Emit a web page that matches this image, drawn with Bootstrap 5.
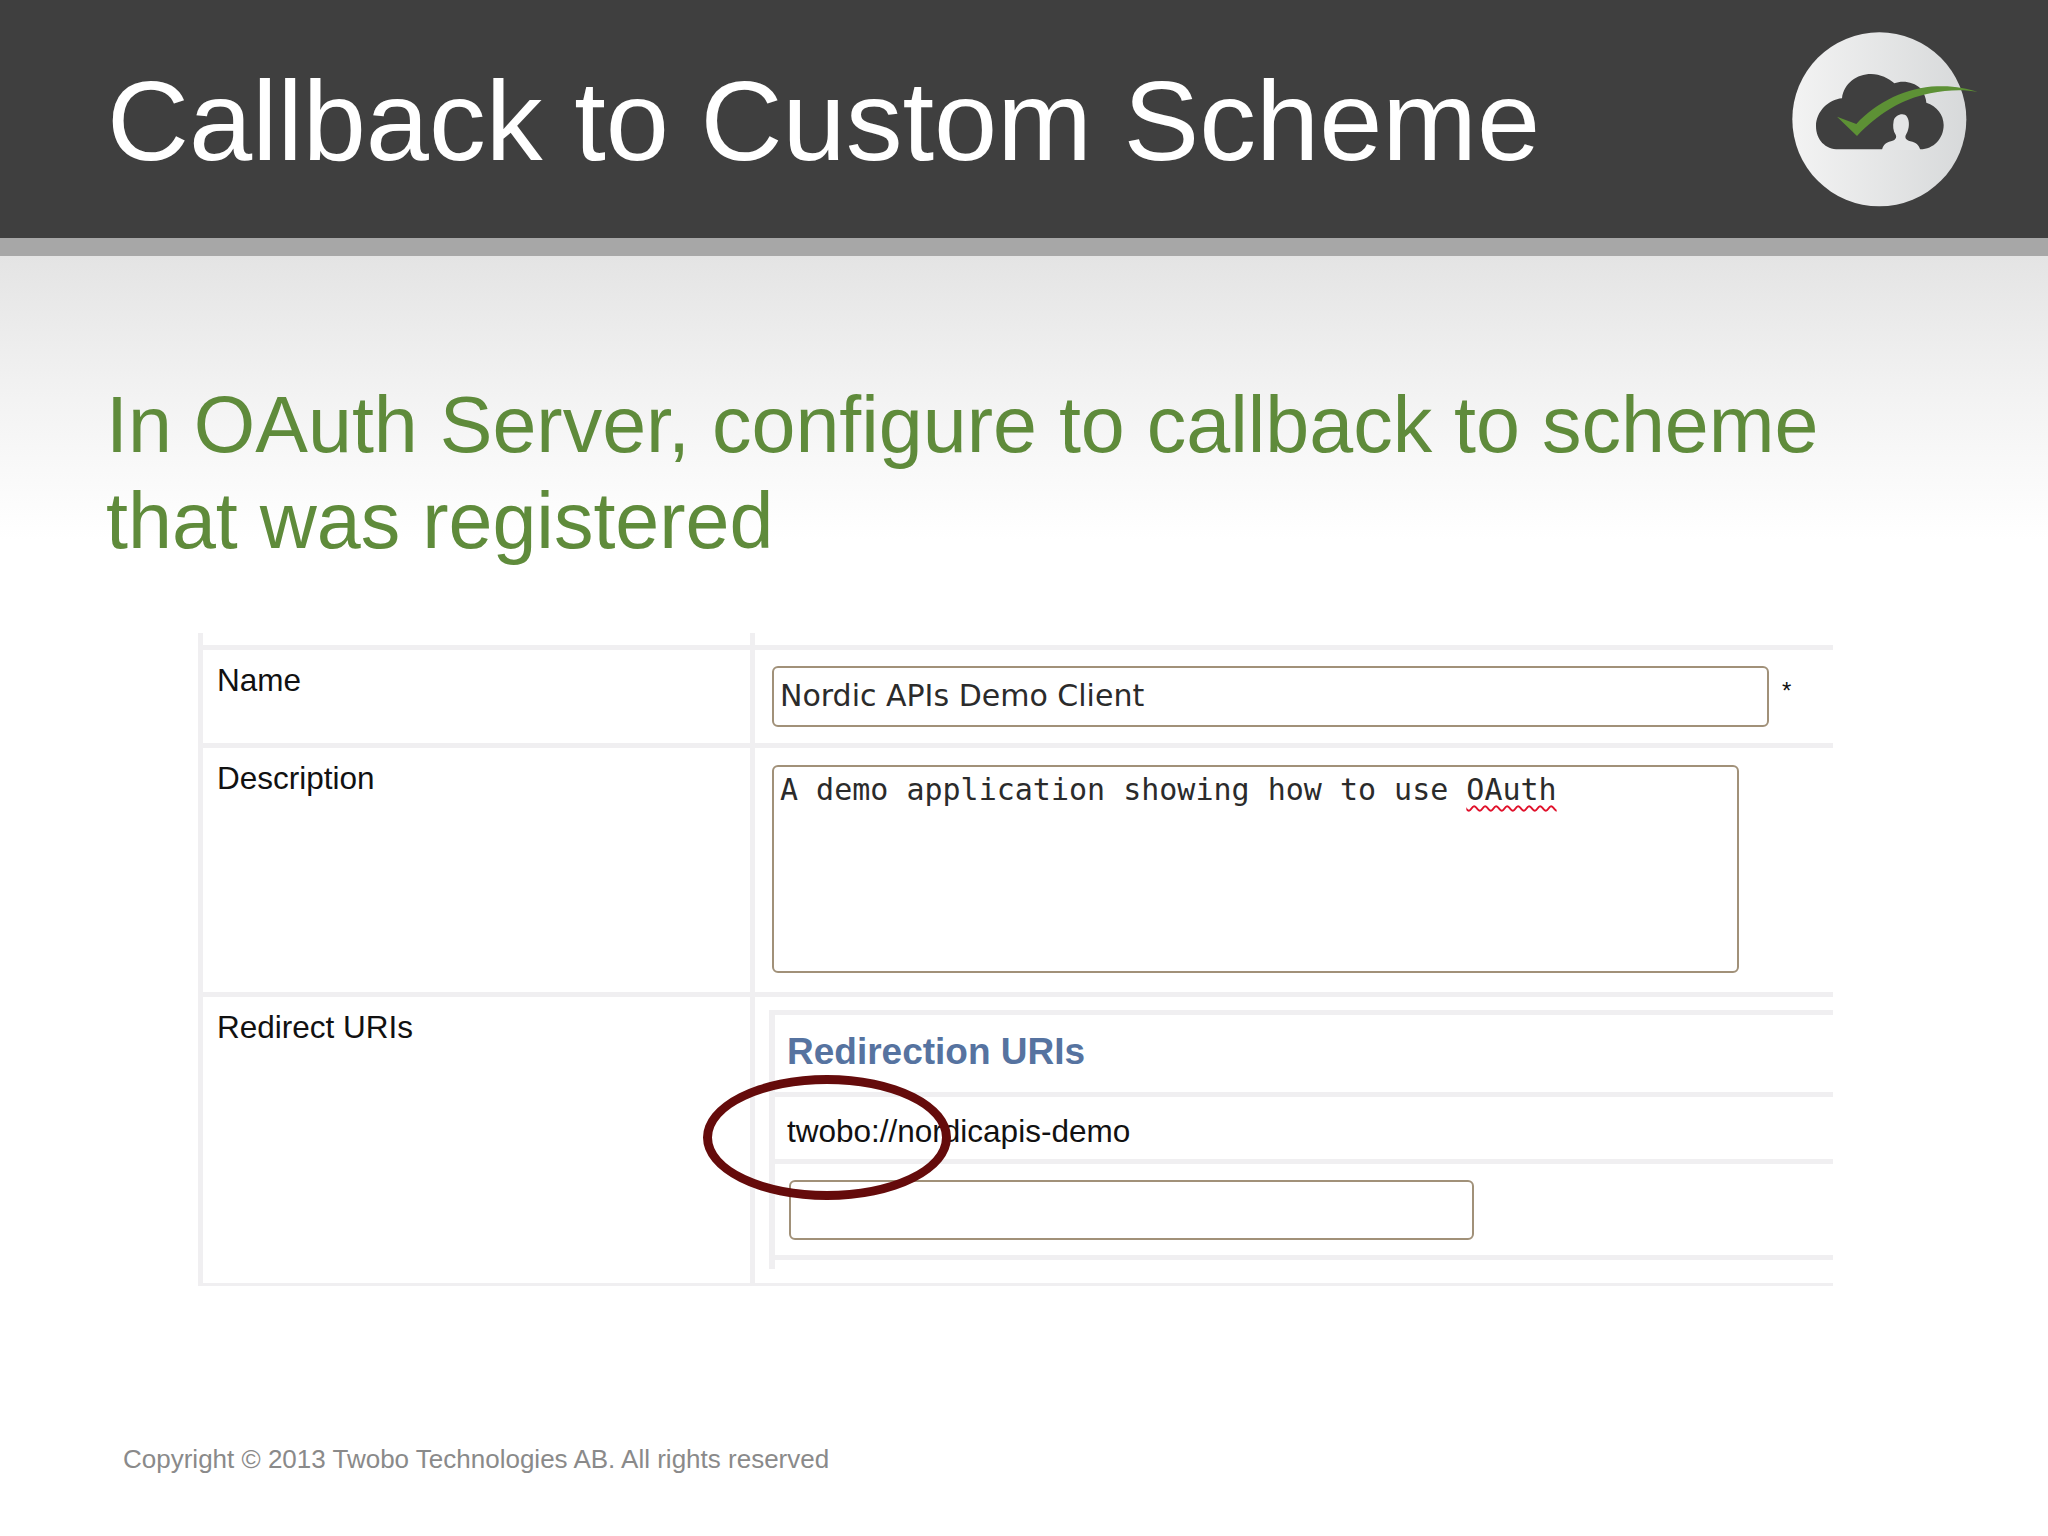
<!DOCTYPE html>
<html lang="en">
<head>
<meta charset="utf-8">
<title>Callback to Custom Scheme</title>
<link href="https://cdn.jsdelivr.net/npm/bootstrap@5.3.0/dist/css/bootstrap.min.css" rel="stylesheet">
<style>
html, body { margin: 0; width: 2048px; height: 1536px; overflow: hidden; }
body {
  font-family: "Liberation Sans", Arial, sans-serif; color: #111;
  background: linear-gradient(#e4e4e4 256px, #f3f3f3 400px, #ffffff 540px) no-repeat;
}
.slide-head { height: 256px; background: #3f3f3f; border-bottom: 18px solid #a7a7a7; padding: 0 0 0 107px; }
.slide-title { font-size: 113.6px; line-height: 1; font-weight: 400; color: #fff; margin: 0 0 -4px; }
.slide-logo { width: 187px; height: 175px; margin-right: 69px; display: block; }
.slide-sub { font-family: inherit; font-size: 79px; line-height: 96px; font-weight: 400; color: #5f8b3b; margin: 121px 0 0 106px; width: 1800px; }
.sheet { width: 1635px; margin: 64px 0 0 198px; border-left: 5px solid #f0eff1; border-bottom: 3px solid #f0eff1; font-size: 31.5px; line-height: 36px; }
.sheet-row { border-top: 5px solid #f0eff1; }
.sheet-stub { height: 12px; }
.sheet-key { width: 552px; flex: none; border-right: 5px solid #f0eff1; padding: 12px 14px; }
.sheet-val { flex: 1 1 auto; min-width: 0; }
.val-name { padding: 16px 0 16px 17px; }
.val-desc { padding: 17px 0 19px 17px; }
.val-uris { padding: 13px 0 14px 14px; }
.field.form-control { border: 2px solid #a19179; border-radius: 6px; color: #2b2b2b; background: #fff; box-shadow: none; }
.field-name { width: 997px; height: 61px; padding: 0 0 0 6px; font-family: "DejaVu Sans", sans-serif; font-size: 30px; line-height: 55px; }
.field-desc { width: 967px; height: 208px; padding: 5px 6px; font-family: "DejaVu Sans Mono", monospace; font-size: 30px; line-height: 36px; white-space: pre; }
.field-uri { width: 685px; height: 60px; padding: 0 6px; }
.spell { text-decoration: underline wavy #e0102a 2px; text-underline-offset: 5px; }
.req-star { font-size: 24px; line-height: 1; margin: 13px 0 0 13px; }
.uri-box { border-left: 6px solid #f0eff1; border-top: 5px solid #f0eff1; }
.uri-title { height: 77px; padding: 15px 0 0 12px; margin: 0; font-family: inherit; font-size: 37px; line-height: 44px; font-weight: 700; color: #5673a0; }
.uri-item { height: 67px; border-top: 5px solid #f0eff1; padding: 16px 0 0 12px; }
.uri-new { height: 96px; border-top: 5px solid #f0eff1; padding: 16px 0 0 14px; }
.uri-end { height: 14px; border-top: 5px solid #f0eff1; }
.sheet-wrap { position: relative; }
.ring { position: absolute; left: 703px; top: 442px; width: 248px; height: 125px; border: 9px solid #650b0b; border-radius: 50%; }
.slide-foot { margin: 157px 0 0 123px; font-size: 26px; line-height: 32px; color: #8a8a8a; }
</style>
</head>
<body>
<header class="slide-head d-flex align-items-center justify-content-between">
  <h1 class="slide-title">Callback to Custom Scheme</h1>
  <svg class="slide-logo" viewBox="275 97 561 523" aria-hidden="true">
    <defs><linearGradient id="disc" x1="0" y1="0" x2="1" y2="0"><stop offset="0" stop-color="#f3f3f3"/><stop offset="1" stop-color="#d7d9da"/></linearGradient></defs>
    <circle cx="537" cy="358" r="261" fill="url(#disc)"/>
    <path d="M415 448C375 448 347 420 347 378C347 335 385 298 425 295C430 250 470 222 512 222C540 222 565 235 582 250C605 240 640 245 660 265C672 280 677 295 678 308C710 318 730 345 730 375C730 415 700 448 660 448Z" fill="#3f3f3f"/>
    <path d="M545 450C548 436 556 428 572 424C586 420 590 412 586 404C578 392 577 378 580 362C584 345 610 335 620 350C628 362 628 385 618 402C612 412 616 420 630 424C648 428 656 436 660 450Z" fill="#e4e5e6"/>
    <path d="M410 350L468 372C530 305 620 262 710 259C760 257 800 265 832 276C790 268 740 270 690 280C600 298 530 345 470 408Z" fill="#5d9135"/>
  </svg>
</header>
<h2 class="slide-sub">In OAuth Server, configure to callback to scheme that was registered</h2>
<div class="sheet-wrap">
  <section class="sheet">
    <div class="d-flex sheet-stub"><div class="sheet-key p-0"></div></div>
    <div class="d-flex sheet-row">
      <div class="sheet-key">Name</div>
      <div class="sheet-val val-name d-flex align-items-start">
        <div class="form-control field field-name">Nordic APIs Demo Client</div>
        <span class="req-star">*</span>
      </div>
    </div>
    <div class="d-flex sheet-row">
      <div class="sheet-key">Description</div>
      <div class="sheet-val val-desc">
        <div class="form-control field field-desc">A demo application showing how to use <span class="spell">OAuth</span></div>
      </div>
    </div>
    <div class="d-flex sheet-row">
      <div class="sheet-key">Redirect URIs</div>
      <div class="sheet-val val-uris">
        <div class="uri-box">
          <h3 class="uri-title">Redirection URIs</h3>
          <div class="uri-item">twobo://nordicapis-demo</div>
          <div class="uri-new"><input class="form-control field field-uri" type="text" aria-label="New redirect URI"></div>
          <div class="uri-end"></div>
        </div>
      </div>
    </div>
  </section>
  <div class="ring"></div>
</div>
<footer class="slide-foot">Copyright © 2013 Twobo Technologies AB. All rights reserved</footer>
<script src="https://cdn.jsdelivr.net/npm/bootstrap@5.3.0/dist/js/bootstrap.bundle.min.js"></script>
</body>
</html>
